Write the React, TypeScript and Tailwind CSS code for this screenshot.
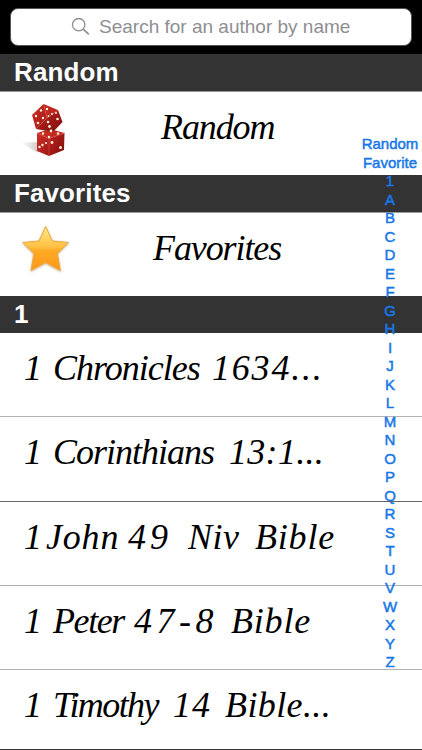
import { useState } from "react";

interface Word {
  text: string;
  className: string;
}

interface Author {
  id: string;
  border: string;
  words: Word[];
}

const authors: Author[] = [
  {
    id: "chronicles",
    border: "border-[#b2b2b2]",
    words: [
      { text: "1", className: "w-[29px]" },
      { text: "Chronicles", className: "w-[159px] tracking-[-1px]" },
      { text: "1634...", className: "w-[112px] tracking-[1.8px]" },
    ],
  },
  {
    id: "corinthians",
    border: "border-[#b2b2b2]",
    words: [
      { text: "1", className: "w-[29px]" },
      { text: "Corinthians", className: "w-[176px] tracking-[-1px]" },
      { text: "13:1...", className: "w-[112px] tracking-[0.3px]" },
    ],
  },
  {
    id: "john",
    border: "border-[#b2b2b2]",
    words: [
      { text: "1", className: "w-[22px]" },
      { text: "John", className: "w-[82px] tracking-[0.8px]" },
      { text: "49", className: "w-[60px] tracking-[4px]" },
      { text: "Niv", className: "w-[67px] tracking-[0.5px]" },
      { text: "Bible", className: "w-[90px] tracking-[0.8px]" },
    ],
  },
  {
    id: "peter",
    border: "border-[#b2b2b2]",
    words: [
      { text: "1", className: "w-[29px]" },
      { text: "Peter", className: "w-[81px] tracking-[-1.4px]" },
      { text: "47-8", className: "w-[97px] tracking-[4.5px]" },
      { text: "Bible", className: "w-[90px] tracking-[0.8px]" },
    ],
  },
  {
    id: "timothy",
    border: "border-white",
    words: [
      { text: "1", className: "w-[29px]" },
      { text: "Timothy", className: "w-[120px] tracking-[-1.6px]" },
      { text: "14", className: "w-[52px] tracking-[1px]" },
      { text: "Bible...", className: "w-[112px] tracking-[0.4px]" },
    ],
  },
];

const indexTitles = [
  "Random",
  "Favorite",
  "1",
  ..."ABCDEFGHIJKLMNOPQRSTUVWXYZ".split(""),
];

const SectionHeader = ({ title }: { title: string }) => (
  <h2 className="h-[37px] shrink-0 bg-[#333333] pl-[14px] text-[26px] leading-[37px] font-bold tracking-[0.1px] text-white">
    {title}
  </h2>
);

const DiceIcon = () => (
  <svg width="50" height="60" viewBox="20 100 50 60">
    <defs>
      <linearGradient id="dieTop" x1="0" y1="0" x2="1" y2="1">
        <stop offset="0" stopColor="#cf2f28" />
        <stop offset="1" stopColor="#a11714" />
      </linearGradient>
      <linearGradient id="dieSide" x1="0" y1="0" x2="1" y2="1">
        <stop offset="0" stopColor="#c0241f" />
        <stop offset="1" stopColor="#7d0e0c" />
      </linearGradient>
      <linearGradient id="dieShadow" x1="1" y1="0" x2="0" y2="0">
        <stop offset="0" stopColor="#a99a9a" />
        <stop offset="1" stopColor="#ffffff" />
      </linearGradient>
    </defs>
    <path d="M21 143 L37 142 L38 153 Z" fill="url(#dieShadow)" opacity="0.5" />
    {/* lower die */}
    <path d="M37 133 L50 129 L64.500 133 L49 138.500 Z" fill="#c52a22" />
    <path d="M37 133 L49 138.500 L49 156 L37 151 Z" fill="url(#dieTop)" />
    <path d="M49 138.500 L64.500 133 L64 150 L49 156 Z" fill="url(#dieSide)" />
    <path d="M37 133 L49 138.500 L64.500 133 M49 138.500 V156" fill="none" stroke="#e05a4a" strokeWidth="0.5" />
    {/* upper die */}
    <path d="M43.500 104 L58 110 L47 118 Z" fill="#c02720" />
    <path d="M43.500 104 L32 115 L36 129 L47 118 Z" fill="url(#dieTop)" />
    <path d="M58 110 L47 118 L36 129 L53 132 L62.500 122 Z" fill="url(#dieSide)" />
    <path d="M43.500 104 L47 118 L58 110 M47 118 L36 129" fill="none" stroke="#df5042" strokeWidth="0.5" />
    <g fill="#fff3dc">
      <circle cx="41" cy="110.500" r="1.2" />
      <circle cx="47" cy="109" r="1.2" />
      <circle cx="36" cy="116" r="1.2" />
      <circle cx="43" cy="118" r="1.2" />
      <circle cx="38" cy="123" r="1.3" />
      <circle cx="48.500" cy="116" r="0.9" />
      <circle cx="52" cy="114" r="1" />
      <circle cx="56" cy="113" r="1" />
      <circle cx="57.500" cy="119" r="1.3" />
      <circle cx="48" cy="122" r="1.3" />
      <circle cx="49.500" cy="126.500" r="1.4" />
      <circle cx="51" cy="131" r="1.4" />
      <circle cx="43" cy="133.500" r="1.2" />
      <circle cx="58" cy="133.500" r="1.2" />
      <circle cx="49" cy="137" r="1.2" />
      <circle cx="52" cy="142.500" r="1.4" />
      <circle cx="46" cy="143" r="1.1" />
      <circle cx="42.500" cy="145" r="1.2" />
      <circle cx="39.500" cy="147" r="1.2" />
      <circle cx="60.500" cy="147.500" r="1.5" />
    </g>
  </svg>
);

const StarIcon = () => (
  <svg width="54" height="54" viewBox="18 222 54 54">
    <defs>
      <linearGradient id="starFill" x1="0" y1="0" x2="0" y2="1">
        <stop offset="0" stopColor="#ffec8a" />
        <stop offset="0.45" stopColor="#ffc245" />
        <stop offset="0.55" stopColor="#ffab25" />
        <stop offset="1" stopColor="#ff951a" />
      </linearGradient>
      <filter id="starShadow" x="-20%" y="-20%" width="140%" height="140%">
        <feDropShadow dx="0" dy="0.8" stdDeviation="0.9" floodColor="#8a6420" floodOpacity="0.5" />
      </filter>
    </defs>
    <path
      d="M45.700 226.500 L52.300 241 L68.500 242.500 L57.400 253.500 L60.300 270.500 L45.700 262.500 L31 270.500 L34 253.500 L22.800 242.500 L39.100 241 Z"
      fill="url(#starFill)"
      stroke="#eda63a"
      strokeWidth="1"
      strokeLinejoin="round"
      filter="url(#starShadow)"
    />
  </svg>
);

const SearchBar = () => {
  const [query, setQuery] = useState("");

  return (
    <div className="h-[54px] shrink-0 bg-black px-[10px] pt-[8px]">
      <label className="flex h-[38px] items-center rounded-[8px] border border-[#555555] bg-white pl-[60px]">
        <svg width="20" height="20" viewBox="0 0 20 20" fill="none" stroke="#8e8e93">
          <circle cx="7.700" cy="7.700" r="6.200" strokeWidth="1.300" />
          <path d="M12.200 12.200 L17.800 17.300" strokeWidth="1.800" />
        </svg>
        <input
          value={query}
          onChange={(e) => setQuery(e.target.value)}
          placeholder="Search for an author by name"
          className="ml-[8px] w-[290px] text-[19px] outline-none placeholder:text-[#8e8e93]"
        />
      </label>
    </div>
  );
};

export default function App() {
  return (
    <div className="relative flex h-[750px] w-[422px] flex-col overflow-hidden bg-white font-['Liberation_Sans',sans-serif]">
      <SearchBar />

      <SectionHeader title="Random" />
      <div className="flex h-[84px] shrink-0 border-t border-[#999999] pt-[8px] pl-[20px] text-black">
        <DiceIcon />
        <span className="ml-[91px] font-['Liberation_Serif',serif] text-[36px] leading-[54px] tracking-[-1.1px] italic">
          Random
        </span>
      </div>

      <SectionHeader title="Favorites" />
      <div className="flex h-[84px] shrink-0 border-t border-[#999999] pt-[9px] pl-[18px] text-black">
        <StarIcon />
        <span className="ml-[81px] font-['Liberation_Serif',serif] text-[36px] leading-[53px] tracking-[-1.1px] italic">
          Favorites
        </span>
      </div>

      <SectionHeader title="1" />
      {authors.map((author) => (
        <div
          key={author.id}
          className={`flex h-[84.3px] shrink-0 border-b pl-[24px] font-['Liberation_Serif',serif] text-[36px] leading-[70px] text-black italic ${author.border}`}
        >
          {author.words.map((word, i) => (
            <span key={i} className={`shrink-0 whitespace-nowrap ${word.className}`}>
              {word.text}
            </span>
          ))}
        </div>
      ))}

      {/* Section index, floats over the list */}
      <nav className="absolute top-[135px] right-0 flex w-[64px] flex-col items-center text-[15px] leading-[18.5px] text-[#1778e8] [-webkit-text-stroke:0.5px_#1778e8]">
        {indexTitles.map((title) => (
          <a key={title} className="h-[18.5px]">
            {title}
          </a>
        ))}
      </nav>
      <div className="absolute top-[501px] left-0 h-px w-full bg-[#666666]" />
      <div className="absolute bottom-0 left-0 h-px w-full bg-[#333333]" />
    </div>
  );
}
